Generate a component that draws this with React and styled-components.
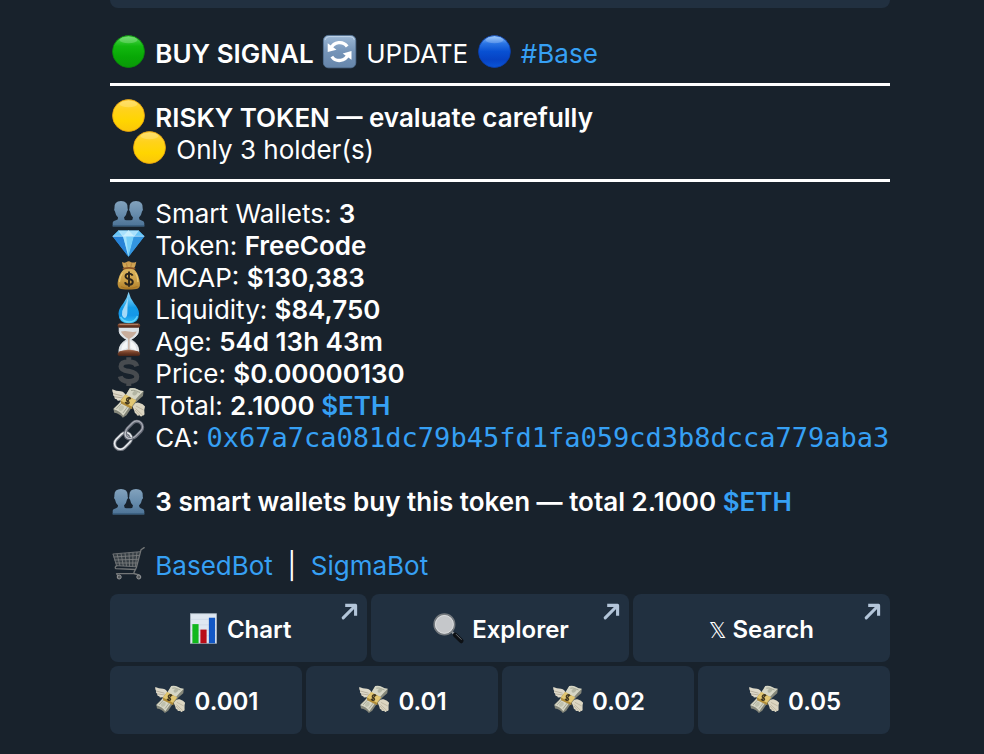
import styled, { createGlobalStyle } from 'styled-components';

const GlobalStyle = createGlobalStyle`
* { box-sizing: border-box; }
body {
  margin: 0;
  background-color: #18222c;
  color: #fff;
  font-family: Inter, 'Liberation Sans', sans-serif;
}
`

const Container = styled.main`
padding: 0 94px 20px 110px;
`
const PreviousCard = styled.div`
height: 8px;
border-radius: 0 0 8px 8px;
background-color: #213040;
`
const Message = styled.div`
padding: 30px 0 12px;
font-size: 26px;
line-height: 32px;
`
const Line = styled.p`
margin: 0;
height: 32px;
white-space: nowrap;
padding-left: ${({ $indent }) => ($indent ? '21px' : '0')};
`
const Rule = styled.hr`
height: 3px;
margin: 13px 0 16px;
border: 0;
background-color: #fff;
`
const Bold = styled.strong`
font-weight: 600;
`
const Link = styled.a`
color: #36a0f4;
text-decoration: none;
`
const Address = styled(Link)`
font-family: 'DejaVu Sans Mono', 'Liberation Mono', monospace;
font-size: 27px;
`
const Emoji = styled.svg`
width: ${({ $small }) => ($small ? '31px' : '34px')};
height: ${({ $small }) => ($small ? '31px' : '34px')};
margin: -6px 2px;
overflow: visible;
`
const Keyboard = styled.div`
display: flex;
flex-direction: column;
gap: 4px;
`
const KeyRow = styled.div`
display: grid;
grid-template-columns: repeat(${({ $cols }) => $cols}, 1fr);
gap: 4px;
`
const Key = styled.button`
position: relative;
height: 68px;
padding: 4px 0 0;
border: 0;
border-radius: 8px;
background-color: #213040;
color: #fff;
font-family: inherit;
font-size: 24px;
font-weight: 600;
line-height: 32px;
text-align: center;
text-decoration: none;
display: flex;
align-items: center;
justify-content: center;
cursor: pointer;
`
const Thin = styled.span`
font-family: 'DejaVu Sans', sans-serif;
font-size: 22px;
font-weight: 400;
`
const Arrow = styled.svg`
position: absolute;
top: 9px;
right: 9px;
width: 17px;
height: 17px;
`

const Gradient = ({ id, colors }) => (
  <linearGradient id={id} x1="0" y1="0" x2="0" y2="1">
    {colors.map((c, i) => (
      <stop key={c + i} offset={i / (colors.length - 1)} stopColor={c} />
    ))}
  </linearGradient>
)

const circles = {
  green: ['#57d957', '#12b80f', '#08a806', '#0a9a08'],
  blue: ['#8cc4ff', '#2a74e4', '#0850d2', '#0643c4', '#0a55d6'],
  yellow: ['#ffd84a', '#ffd21a', '#ffd500', '#fbc60a'],
}
const rims = { green: '#078a08', blue: '#0a3fae', yellow: '#eda50c' }

const Circle = ({ color }) => (
  <Emoji viewBox="0 0 34 34" aria-hidden="true">
    <defs><Gradient id={`c-${color}`} colors={circles[color]} /></defs>
    <circle cx="16.5" cy="16.5" r="16" fill={`url(#c-${color})`} stroke={rims[color]} strokeWidth="0.8" />
    <ellipse cx="16.5" cy="5" rx="9" ry="3.2" fill="#fff" opacity="0.2" />
  </Emoji>
)

const Refresh = () => (
  <Emoji viewBox="0 0 34 34" aria-hidden="true">
    <defs><Gradient id="refresh" colors={['#9db9d6', '#7594b8', '#6686ab']} /></defs>
    <rect x="0.4" y="0.4" width="32.4" height="32.4" rx="5" fill="url(#refresh)" stroke="#587799" strokeWidth="0.8" />
    <path d="M2 5 Q3 1.6 6 1.6 H27 Q30.5 1.6 31.4 5" fill="none" stroke="#c9dced" strokeWidth="0.8" />
    <g fill="none" stroke="#fff" strokeWidth="3.3">
      <path d="M8 13.4 A9.3 9.3 0 0 1 24.2 11.5" />
      <path d="M25 19.7 A9.3 9.3 0 0 1 8.8 21.6" />
    </g>
    <path d="M4.7 8.3 V17 L13.5 14.7 Z M28.5 24.8 V16 L19.7 18.4 Z" fill="#fff" />
  </Emoji>
)

const People = () => (
  <Emoji viewBox="0 0 34 34" aria-hidden="true">
    <defs><Gradient id="people" colors={['#82a2bd', '#688dad', '#4c7295']} /></defs>
    <path d="M0.7 31.5 V28 Q0.8 26 4 25.3 Q6.2 24.8 6.1 22.4 Q3.5 20.3 3 16.5 Q1.6 15.2 2.4 13.6 Q1.8 6.1 9 6.1 Q16.3 6.1 15.6 13.6 Q16.5 15.2 15 16.5 Q14.5 20.3 12 22.4 Q12 25 14.5 25.3 H18.5 Q21 25 21 22.4 Q18.5 20.3 18 16.5 Q16.5 15.2 17.4 13.6 Q16.8 6.1 24 6.1 Q31.3 6.1 30.7 13.6 Q31.5 15.2 30 16.5 Q29.5 20.3 27 22.4 Q26.9 24.8 29 25.3 Q32.2 26 32.3 28 V31.5 Z" fill="url(#people)" />
    <path d="M0.7 30.8 H32.3" stroke="#365b7a" strokeWidth="1" />
  </Emoji>
)

const Diamond = () => (
  <Emoji viewBox="0 0 34 34" aria-hidden="true">
    <path d="M6.5 3.5 H26.5 L32.4 9.3 L16.5 29.8 L0.6 9.3 Z" fill="#38a5ed" />
    <path d="M6.5 3.5 L11 9.3 H0.6 Z M26.5 3.5 L22 9.3 H32.4 Z" fill="#69c5f6" />
    <path d="M6.5 3.5 H16.5 L11 9.3 Z M16.5 3.5 H26.5 L22 9.3 Z" fill="#a8e1fc" />
    <path d="M16.5 3.5 L22 9.3 H11 Z" fill="#c8effd" />
    <path d="M0.6 9.3 H11 L16.5 29.8 Z" fill="#2682d7" />
    <path d="M11 9.3 H22 L16.5 29.8 Z" fill="#76cff8" />
    <path d="M11 9.3 L16.5 29.8 L14.2 9.3 Z" fill="#b7e9fd" opacity="0.7" />
    <path d="M22 9.3 H32.4 L16.5 29.8 Z" fill="#3395df" />
    <path d="M0.6 9.3 H32.4 M6.5 3.5 L11 9.3 L16.5 3.5 L22 9.3 L26.5 3.5" fill="none" stroke="#dcf5ff" strokeWidth="0.6" />
  </Emoji>
)

const MoneyBag = () => (
  <Emoji viewBox="0 0 34 34" aria-hidden="true">
    <defs><Gradient id="bag" colors={['#c9984c', '#d9b25c', '#cda148', '#ad7d28']} /></defs>
    <path d="M10 3 Q13 4.5 15.5 2.6 Q17 1.5 19 3.2 Q21.5 4.2 24.3 2.7 Q23.8 6.8 21.5 10 Q26 13.3 27.4 21 Q29 27.8 26 29.5 Q23 30.5 16.7 30.5 Q10 30.5 7.6 29.5 Q4.6 27.5 6.1 21 Q7.8 13.3 12.5 10 Q10.2 6.5 10 3 Z" fill="url(#bag)" />
    <path d="M9 27.7 Q16.5 31 25.5 27.5" fill="none" stroke="#a16c20" strokeWidth="1" opacity="0.7" />
    <path d="M10.5 14 Q7.5 18 7.5 23 M23.5 14 Q26 18 26 23" fill="none" stroke="#f2d37c" strokeWidth="1.2" opacity="0.8" />
    <path d="M11.5 9.7 Q17 8.1 22.5 9.7" fill="none" stroke="#8c5426" strokeWidth="1.8" strokeLinecap="round" />
    <path d="M14.5 4.5 L15.2 8 M19.5 4.5 L18.8 8" stroke="#a57331" strokeWidth="0.7" />
    <path d="M20.6 16.7 Q19.8 14.6 17 14.6 Q13.5 14.6 13.5 17.2 Q13.5 19.3 17 20 Q20.8 20.8 20.8 23 Q20.8 25.7 17 25.7 Q13.7 25.7 13 23.2 M17 12.5 V27.8" fill="none" stroke="#29241c" strokeWidth="1.9" />
  </Emoji>
)

const Drop = () => (
  <Emoji viewBox="0 0 34 34" aria-hidden="true">
    <defs><Gradient id="drop" colors={['#90d4f5', '#5ec3f5', '#159ce7', '#1497e9', '#35c1f5']} /></defs>
    <path d="M16.6 0.8 Q18 7 22.2 12.4 Q27 18 27 22.4 Q27 32.3 16.7 32.3 Q6.5 32.3 6.5 22.4 Q6.5 18 11.2 12.4 Q15.2 7 16.6 0.8 Z" fill="url(#drop)" />
    <path d="M15.8 7 Q14.8 12 11.8 16.5 Q9.2 20.5 10 24 Q10.9 27.2 13 27 Q15.4 26.2 15.4 20.5 Z" fill="#e0f5ff" opacity="0.7" />
    <path d="M8.5 26 Q11.5 31 17 31 Q23 31 25.5 25" fill="none" stroke="#7ee2ff" strokeWidth="1.5" opacity="0.7" />
  </Emoji>
)

const Hourglass = () => (
  <Emoji viewBox="0 0 34 34" aria-hidden="true">
    <defs><Gradient id="wood" colors={['#a0664a', '#6e3a24', '#472418']} /></defs>
    <path d="M7.2 4 H26.5 V8.5 Q26 13 18.8 16.7 Q26 20 26.7 27 V30 H7 V27 Q7.7 20 14.9 16.7 Q7.6 13 7.2 8.5 Z" fill="#dde3e8" stroke="#f3f5f6" strokeWidth="0.8" />
    <path d="M9 8.5 Q13 7.7 16.8 8.5 Q21 9.3 24.7 8.5 Q23.5 12 17.5 15.8 V26 Q21 26.8 22.5 29.5 H11 Q12.8 26.8 16.2 26 V15.8 Q10 12 9 8.5 Z" fill="#c8ad9c" />
    <path d="M10 23 Q12 19.3 15.2 18 V25 Q11 26 9 28.5 Z M23.7 23 Q21.7 19.3 18.5 18 V25 Q22.5 26 24.7 28.5 Z" fill="#fff" opacity="0.7" />
    <rect x="5.6" y="0.4" width="22.6" height="4.4" rx="2" fill="url(#wood)" />
    <path d="M7.5 28.2 Q16.8 25.6 26.2 28.2 L28.2 30.8 Q28.2 33 26 33 H7.6 Q5.5 33 5.5 30.8 Z" fill="url(#wood)" />
    <path d="M7.5 1.4 H26" stroke="#c89678" strokeWidth="0.7" />
  </Emoji>
)

const Dollar = () => (
  <Emoji viewBox="0 0 34 34" aria-hidden="true">
    <path d="M24.8 11.2 Q23.5 6.8 16.9 6.8 Q9 6.8 9 11.4 Q9 15 16.8 16.3 Q24.8 17.8 24.8 21.8 Q24.8 26.4 16.9 26.4 Q9.5 26.4 8.2 21.4 M16.8 2.3 V6 M16.8 27 V31" fill="none" stroke="#474b4f" strokeWidth="5" />
  </Emoji>
)

const FlyingMoney = ({ $small }) => (
  <Emoji viewBox="0 0 34 34" $small={$small} aria-hidden="true">
    <path d="M0.3 2.3 Q4 4.2 8.8 4.2 Q13 5 14.2 9.3 L12 14.2 L7.5 13.4 Q5 14.4 4.7 12.3 Q1.8 11.8 2.6 9.8 Q0.2 8.5 1.2 6.6 Q-0.2 4.6 0.3 2.3 Z" fill="#ded9c9" />
    <path d="M1.3 6.6 L10.5 9 M2.7 9.8 L11 11" stroke="#a9a18e" strokeWidth="0.8" />
    <path d="M20 18.5 Q22.8 15 27 15.7 Q31.4 17 33 19.5 Q32 22.5 32.4 25.5 Q33 29 30.5 28.5 Q29 30.8 27.6 28.2 Q24.8 29.5 24.4 27 Q22.4 26.5 22.2 23.5 Z" fill="#dcd6c2" />
    <path d="M24 19 L31.5 23 M23.5 21.5 L30.4 28 M23 23 L27.5 28" stroke="#aaa18c" strokeWidth="0.6" />
    <path d="M17.8 1.5 Q22 0.4 25 2.2 Q28.4 4.2 31.6 4.3 L31 9 Q22 16 14.5 28.3 L10.8 30.7 Q7.6 26.5 2.2 25.7 L1.4 21.5 Q12 12.5 17.8 1.5 Z" fill="#85877a" />
    <path d="M17.8 1.2 Q21.5 0.3 24.8 2 Q28 4 31.6 4.1 Q22 13 11.3 28.8 Q8 23.8 1.5 22.2 Q11.5 12.8 17.8 1.2 Z" fill="#d6d6c5" />
    <path d="M19 3.5 Q22 2.6 24.8 4.3 L28 5.5 M4.5 21.8 L11 14.8 M11 25.9 L19 15.4" fill="none" stroke="#9a9c8b" strokeWidth="0.9" />
    <ellipse cx="23" cy="6" rx="2.9" ry="2" fill="#b3b5a3" transform="rotate(-35 23 6)" />
    <ellipse cx="9.2" cy="21.2" rx="3" ry="2.2" fill="#bfc1ae" transform="rotate(-45 9.2 21.2)" />
    <path d="M13.3 7.6 L24.2 13.6 L20.2 18.9 L20.2 22.2 L9 16.6 L8.6 13.6 Z" fill="#b08c38" />
    <path d="M13.3 7.6 L24.2 13.6 L19.7 19.4 L8.8 13.8 Z" fill="#e2c772" />
    <path d="M18.9 11.9 Q17 9.9 15.3 11.3 Q13.5 13.2 16 14.3 Q18 15.3 16.4 16.6 Q14.4 17.4 13.2 15 M18.2 10.2 L14 17.2" fill="none" stroke="#41371f" strokeWidth="1.4" />
  </Emoji>
)

const Chain = () => (
  <Emoji viewBox="0 0 34 34" aria-hidden="true">
    <g fill="none">
      <rect x="-9.5" y="-5.8" width="19" height="11.6" rx="5.8" transform="translate(22.2 10.8) rotate(-45)" stroke="#666a76" strokeWidth="3.2" />
      <rect x="-9.5" y="-5.8" width="19" height="11.6" rx="5.8" transform="translate(22.2 10.3) rotate(-45)" stroke="#a9adb6" strokeWidth="1.2" />
      <rect x="-9.5" y="-5.8" width="19" height="11.6" rx="5.8" transform="translate(11 22.1) rotate(-45)" stroke="#777c85" strokeWidth="3.2" />
      <rect x="-9.5" y="-5.8" width="19" height="11.6" rx="5.8" transform="translate(11 21.8) rotate(-45)" stroke="#eceff1" strokeWidth="1.5" />
      <path d="M13.7 12.5 Q12.2 15.9 14.2 18.3 Q16.4 20.5 19.7 19.5" stroke="#666a76" strokeWidth="3.2" />
      <path d="M13.7 12.3 Q12.2 15.7 14.2 18 Q16.4 20.2 19.7 19.2" stroke="#c5c9cf" strokeWidth="1.2" />
    </g>
  </Emoji>
)

const Cart = () => (
  <Emoji viewBox="0 0 34 34" aria-hidden="true">
    <path d="M1 7.5 L28 4.7 L24.3 19.7 L4.5 18.5 Z" fill="#454c50" opacity="0.7" />
    <g fill="none" stroke="#7d8081" strokeWidth="0.8">
      <path d="M0.7 7 L28 4.7 M1.5 10 L27.4 8.4 M2.3 13 L26.5 12.3 M3.4 16 L25.5 16 M4.4 18.7 L24.4 19.8" />
      <path d="M1 7 L4.6 18.7 M5 6.7 L8 18.9 M9 6.4 L11.3 19 M13 6 L14.5 19.2 M17 5.7 L17.6 19.4 M21 5.4 L20.7 19.5 M25 5 L23.4 19.7" />
    </g>
    <path d="M32.2 0.6 L29 2.8 L24.4 20.5 L22 25.4 Q21.5 27 23.4 27 L27 28 M5 18.7 Q2 20 4 21.7 L23.6 22.5 M6 29 L4.5 26.7 H23" fill="none" stroke="#737677" strokeWidth="1.3" strokeLinecap="round" strokeLinejoin="round" />
    <g fill="#55585a" stroke="#96989a" strokeWidth="1">
      <circle cx="7.2" cy="30" r="2" />
      <circle cx="26.8" cy="30" r="2" />
    </g>
  </Emoji>
)

const BarChart = () => (
  <Emoji viewBox="0 0 34 34" $small aria-hidden="true">
    <rect x="2.7" y="0.8" width="28.5" height="32.4" fill="#dfe7f1" stroke="#aeb9c5" strokeWidth="0.9" />
    <path d="M3 7 H31 M3 13 H31 M3 19 H31 M3 25 H31" stroke="#c8d3df" strokeWidth="0.6" />
    <rect x="4.8" y="12.2" width="6.8" height="21" fill="#12b81e" />
    <rect x="13.6" y="18.2" width="6.8" height="15" fill="#b80d18" />
    <rect x="22.9" y="5.2" width="6.8" height="28" fill="#1257c5" />
  </Emoji>
)

const Magnifier = () => (
  <Emoji viewBox="0 0 34 34" $small aria-hidden="true">
    <path d="M20.3 20.3 L25 25" stroke="#999ea3" strokeWidth="2.4" />
    <path d="M24.2 24 L31 30.7" stroke="#0d1014" strokeWidth="5" strokeLinecap="round" />
    <path d="M25.5 23.5 L31 29" stroke="#747a80" strokeWidth="1" strokeLinecap="round" />
    <circle cx="12.5" cy="12.5" r="11.2" fill="#c8cacd" stroke="#74797e" strokeWidth="1.8" />
    <circle cx="12.5" cy="12.5" r="9.8" fill="#c5c7ca" stroke="#e6e7e8" strokeWidth="0.7" />
  </Emoji>
)

const OpenArrow = () => (
  <Arrow viewBox="0 0 17 17" fill="none" stroke="#b3c5d9" aria-hidden="true">
    <path d="M4.2 2.4 H14.6 V12.8" strokeWidth="3.1" strokeLinejoin="round" />
    <path d="M14 3 L2.2 14.8" strokeWidth="3.1" strokeLinecap="round" />
  </Arrow>
)

const details = [
  { icon: <People />, label: 'Smart Wallets', value: '3' },
  { icon: <Diamond />, label: 'Token', value: 'FreeCode' },
  { icon: <MoneyBag />, label: 'MCAP', value: '$130,383' },
  { icon: <Drop />, label: 'Liquidity', value: '$84,750' },
  { icon: <Hourglass />, label: 'Age', value: '54d 13h 43m' },
  { icon: <Dollar />, label: 'Price', value: '$0.00000130' },
]

const amounts = ['0.001', '0.01', '0.02', '0.05']

const App = () => {
  return (
    <>
      <GlobalStyle />
      <Container>
        <PreviousCard />
        <Message>
          <Line>
            <Circle color="green" /> <Bold>BUY SIGNAL</Bold> <Refresh /> UPDATE <Circle color="blue" /> <Link href="#base">#Base</Link>
          </Line>
          <Rule />
          <Line><Circle color="yellow" /> <Bold>RISKY TOKEN — evaluate carefully</Bold></Line>
          <Line $indent><Circle color="yellow" /> Only 3 holder(s)</Line>
          <Rule />
          {details.map(({ icon, label, value }) => (
            <Line key={label}>{icon} {label}: <Bold>{value}</Bold></Line>
          ))}
          <Line>
            <FlyingMoney /> Total: <Bold>2.1000 <Link href="#eth">$ETH</Link></Bold>
          </Line>
          <Line>
            <Chain /> CA: <Address href="#address">0x67a7ca081dc79b45fd1fa059cd3b8dcca779aba3</Address>
          </Line>
          <Line />
          <Line>
            <People /> <Bold>3 smart wallets buy this token — total 2.1000 <Link href="#eth">$ETH</Link></Bold>
          </Line>
          <Line />
          <Line>
            <Cart /> <Link href="#basedbot">BasedBot</Link>&nbsp; |&nbsp; <Link href="#sigmabot">SigmaBot</Link>
          </Line>
        </Message>
        <Keyboard>
          <KeyRow $cols={3}>
            <Key as="a" href="#chart"><span><BarChart /> Chart</span><OpenArrow /></Key>
            <Key as="a" href="#explorer"><span><Magnifier /> Explorer</span><OpenArrow /></Key>
            <Key as="a" href="#search"><span><Thin>𝕏</Thin> Search</span><OpenArrow /></Key>
          </KeyRow>
          <KeyRow $cols={4}>
            {amounts.map((amount) => (
              <Key key={amount} type="button"><span><FlyingMoney $small /> {amount}</span></Key>
            ))}
          </KeyRow>
        </Keyboard>
      </Container>
    </>
  )
}

export default App
